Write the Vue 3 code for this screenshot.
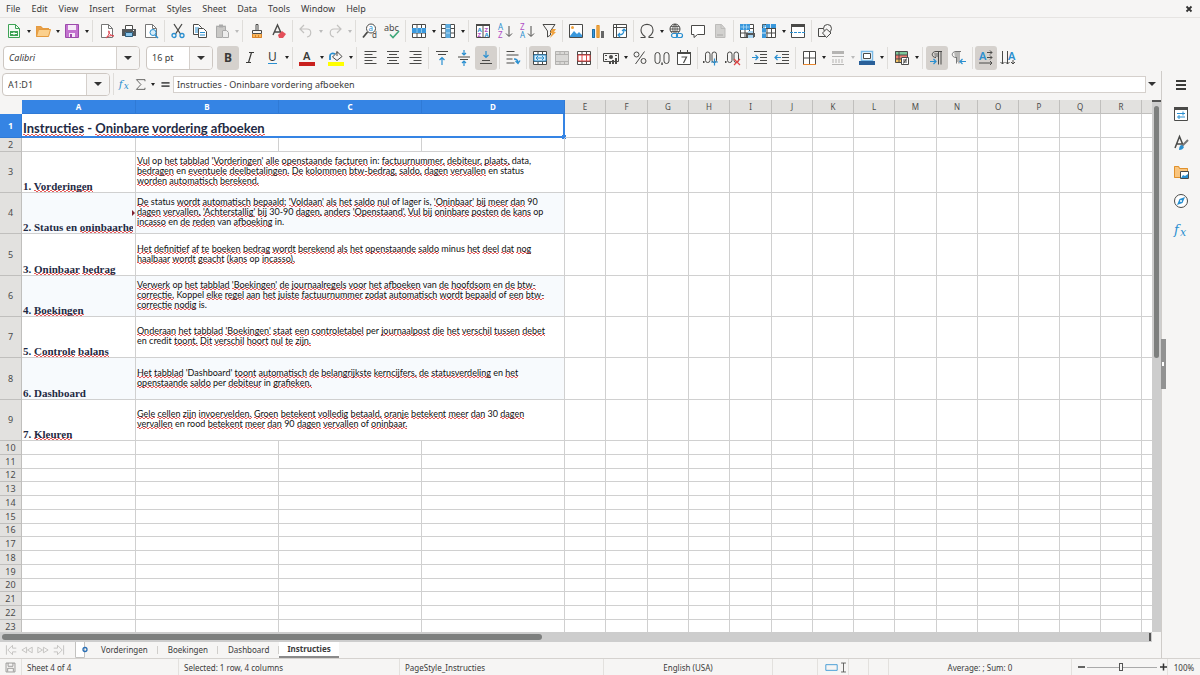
<script setup>
const D = '#4a4a48'
const B = '#2a8fd0'
const s = (d, c = D, w = 1) => `<path d="${d}" fill="none" stroke="${c}" stroke-width="${w}"/>`
const f = (d, c) => `<path d="${d}" fill="${c}"/>`
const grid = (c = D) => f('M1.500 1.500h13v13h-13z', '#fff') + s('M1.500 1.500h13v13h-13zM1.500 5.500h13M1.500 10h13M6 1.500v13M10.500 1.500v13', c)

const icons = {
  new: f('M2.500 1h7l4 4v10h-11z', '#f4fbf5') + s('M2.500 1.500h7l4 4v9h-11zM9.500 1.500v4h4', '#3fa356') + f('M4 8h8v5H4z', '#3fa356') + s('M5 10.500h6M8 9v3', '#fff'),
  open: f('M1 3h5l2 2h6v8H1z', '#e8a04a') + f('M3.500 6.500h12l-2 7.500H1z', '#fbd08d') + s('M1.500 13.500v-10h4l2 2h6v1M1.500 13.500l2-7h12l-2 7z', '#e59b3f'),
  save: f('M1.500 1.500h13v13h-13z', '#c373cf') + s('M1.500 1.500h13v13h-13z', '#9c4aab') + f('M4 2h8v5H4z', '#f6eaf8') + f('M5 10h6v4H5z', '#f6eaf8') + f('M6 11h2v3H6z', '#9c4aab'),
  pdf: f('M2.500 1h7l4 4v10h-11z', '#fff') + s('M2.500 1.500h7l4 4v9h-11zM9.500 1.500v4h4', '#777') + s('M7 15c3-3 4-6 3-7s-1 4 5 5c-3-1-6 0-8 2', '#dc4450', 1),
  print: f('M4 2h8v4H4z', '#fff') + s('M4.500 6V2.500h7V6') + f('M1 6h14v7H1z', '#55585a') + f('M4 9h8v5H4z', '#8cc6ec') + s('M4.500 9.500h7v4h-7z', '#2e5d7c') + f('M12 7h1v1h-1z', '#fff'),
  preview: f('M2.500 1h7l4 4v10h-11z', '#fff') + s('M2.500 1.500h7l4 4v9h-11zM9.500 1.500v4h4', '#777') + '<circle cx="10" cy="9.500" r="3" fill="#d8edf9" stroke="#2a8fd0"/>' + s('M12 12l3 3', B, 1.500),
  cut: s('M4 1l6.500 10M12 1L5.500 11', D, 1.300) + '<circle cx="4" cy="12.500" r="2" fill="none" stroke="#2a8fd0" stroke-width="1.300"/><circle cx="12" cy="12.500" r="2" fill="none" stroke="#2a8fd0" stroke-width="1.300"/>',
  copy: f('M1.500 1.500h6l2 2v8h-8z', '#fff') + s('M1.500 1.500h5l3 3v7h-8z') + s('M3 5h4M3 7h4M3 9h3', B) + f('M6.500 5.500h5l3 3v6h-8z', '#fff') + s('M6.500 5.500h5l3 3v6h-8z') + s('M8 9.500h5M8 12h5', B),
  paste: f('M2 2.500h10v12H2z', '#c9c8c6') + s('M2.500 3.500h9v11h-9z', '#aaa') + f('M5 1.500h4v3H5z', '#aaa') + f('M8 7h7v8H8z', '#ededed') + s('M8.500 7.500h4l2 2v5h-6z', '#aaa'),
  clone: s('M7 1.500h2v6H7z') + s('M3.500 7.500h9v3h-9z') + f('M3 11h10v4H3z', '#f7b65e') + s('M3.500 11v3.500h9V11M6.500 12v2.500M9.500 12v2.500', '#d9832a'),
  clear: s('M2 12L6.500 2 11 12M3.500 9h6', D, 1.400) + f('M7 12l4-4 4 3-3 4H8z', '#e4505a'),
  undo: s('M2 6h7c5 0 5 7 0 8M6 2L2 6l4 4', '#c3c2c0', 1.200),
  redo: s('M14 6H7c-5 0-5 7 0 8M10 2l4 4-4 4', '#c3c2c0', 1.200),
  find: '<circle cx="9" cy="5.500" r="4.500" fill="#fff" stroke="#4a4a48"/>' + s('M5.500 9L1 14.500', D, 1.800) + '<text x="6.500" y="8" font-size="8" font-family="Noto Sans" fill="#2a8fd0">a</text><text x="10" y="15" font-size="8" font-family="Noto Sans" fill="#4a4a48">d</text>',
  spell: '<text x="0" y="7.500" font-size="9" font-family="Noto Sans" fill="#4a4a48">abc</text>' + s('M6 11.500l3 3L15 8', '#3fa87a', 1.600),
  row: grid() + f('M1 5h14v5H1z', '#3a98dc') + s('M6 5v5M10.500 5v5', '#8cc6ec'),
  col: grid() + f('M5.500 1h5v14h-5z', '#5eacdf') + s('M6 5.500h4M6 10h4', '#b9dcf3'),
  sort: f('M1 1h14v14H1z', '#fff') + s('M1.500 1.500h13v13h-13zM8 1.500v13') + f('M1 1h14v2H1z', D) + '<g font-size="6" font-weight="700" font-family="Noto Sans"><text x="2.500" y="8.500" fill="#2a8fd0">A</text><text x="2.500" y="14" fill="#b14fc5">Z</text><text x="9.500" y="8.500" fill="#b14fc5">Z</text><text x="9.500" y="14" fill="#2a8fd0">A</text></g>',
  asc: '<g font-size="8" font-family="Noto Sans"><text x="1" y="7" fill="#2a8fd0">A</text><text x="1" y="15" fill="#b14fc5">Z</text></g>' + s('M12 3v10M9 10.500l3 3 3-3', D),
  desc: '<g font-size="8" font-family="Noto Sans"><text x="1" y="7" fill="#b14fc5">Z</text><text x="1" y="15" fill="#2a8fd0">A</text></g>' + s('M12 3v10M9 10.500l3 3 3-3', D),
  filter: s('M2 1.500h12L9.500 8v4l-3 2V8z') + f('M11 6h4l-2 3h2l-6 6 2-5H9z', '#f0a23e'),
  image: f('M1.500 1.500h13v13h-13z', '#fff') + s('M1.500 1.500h13v13h-13z') + f('M2 13l4-5 3 3 2-2 3 3v2H2z', '#3a98dc') + '<circle cx="4.500" cy="4.500" r="1.500" fill="#f0a23e"/>',
  chart: f('M2 6h3v9H2z', '#3a98dc') + f('M6.500 2h3v13h-3z', '#f5b14e') + f('M11 8h3v7h-3z', '#666') + s('M2.500 6.500h2v8h-2z', '#1d6fa8') + s('M7 2.500h2v12H7z', '#e0912c'),
  pivot: f('M1.500 1.500h13v13h-13z', '#fff') + s('M1.500 1.500h13v13h-13zM1.500 4.500h13M4.500 1.500v13') + s('M7 12c4 0 5-2 5-5M10 8l2-2 2 2M8 10l-2 2 2 2', B, 1.200),
  omega: s('M1.500 14.500h4.500v-1C3 11.500 2 9.500 2 7c0-7.500 12-7.500 12 0 0 2.500-1 4.500-4 6.500v1h4.500', D, 1.100),
  link: '<circle cx="7" cy="6" r="5" fill="none" stroke="#4a4a48"/>' + s('M2 6h10M7 1v10M7 1c-3 3-3 7 0 10M7 1c3 3 3 7 0 10M3 3.500h8M3 8.500h8', D, .8) + '<rect x="3.500" y="10.500" width="6" height="4" rx="2" fill="#f6f5f4" stroke="#2a8fd0" stroke-width="1.200"/><rect x="8.500" y="10.500" width="6" height="4" rx="2" fill="none" stroke="#2a8fd0" stroke-width="1.200"/>',
  comment: f('M1.500 2.500h13v9h-8l-3 3v-3h-2z', '#fff') + s('M1.500 2.500h13v9h-7l-3.500 3v-3H1.500z'),
  page: f('M3 1.500h6l4 4v9H3z', '#d2d1cf') + s('M3.500 1.500h6l3.500 4v9H3.500zM9 1.500v4h4', '#bdbcba') + f('M5 11h6v2H5z', '#bebdbb'),
  printarea: grid() + f('M1 1h10v6H1z', '#3a98dc') + s('M1.500 4h9M4.500 1.500v5M7.500 1.500v5', '#a9d5f2', .8) + f('M7 10h9v4H7z', '#55585a') + f('M9 8h5v2H9zM9 12h5v3H9z', '#a9d5f2'),
  freeze: grid() + f('M1 5h4v10H1zM5 1h10v4H5z', '#3a98dc') + s('M1 10h4M9.500 1v4', '#fff', .8) + s('M1 3h5M3 1v4', B),
  split: f('M1.500 1.500h13v13h-13z', '#fff') + s('M1.500 1.500h13v13h-13z') + f('M1 1h14v3H1z', D) + '<path d="M0 9.500h16" stroke="#2a8fd0" stroke-dasharray="3 1"/>',
  shapes: s('M1.500 5.500h7v8h-7z') + '<circle cx="10.500" cy="5.500" r="4" fill="#f6f5f4" stroke="#4a4a48"/>' + f('M9.500 6l4.500 4-4.500 4.500L5.500 10z', '#f6f5f4') + s('M9.500 6l4.500 4-4.500 4.500L5.500 10z'),
  bold: '<text x="4" y="12" font-size="12" font-weight="700" font-family="Noto Sans" fill="#3a3a38">B</text>',
  italic: s('M7 2.500h5M4 12.500h5M9.500 2.500l-3 10', '#3a3a38', 1.200),
  underline: '<text x="4" y="11" font-size="12" font-family="Noto Sans" fill="#3a3a38">U</text>' + s('M4 13.500h9', B, 1),
  color: '<text x="4" y="10" font-size="11" font-weight="600" font-family="Noto Sans" fill="#3a3a38">A</text>' + f('M0 12h16v4H0z', '#c9211e'),
  high: s('M4.500 7l5-5 4.500 4.500-5 4z') + s('M2 10V6c0-3 3-3 5-2', B, 1.800) + s('M9 1v5', D) + f('M0 12h16v4H0z', '#ffff00'),
  left: s('M1.500 1.500h12M1.500 4.500h8M1.500 7.500h12M1.500 10.500h8M1.500 13.500h12'),
  center: s('M2 1.500h12M4 4.500h8M2 7.500h12M4 10.500h8M2 13.500h12'),
  right: s('M2.500 1.500h12M6.500 4.500h8M2.500 7.500h12M6.500 10.500h8M2.500 13.500h12'),
  top: s('M2 1.500h12M4 4.500h8') + s('M8 15V8M5.500 10L8 7.500l2.500 2.500', B, 1.200),
  middle: s('M2 7h12M4 9.500h8') + s('M8 0v5M6 3l2 2 2-2M8 16v-5M6 13l2-2 2 2', B, 1.200),
  bottom: s('M2 13.500h12M4 10.500h8') + s('M8 1v6M5.500 5L8 7.500 10.500 5', B, 1.200),
  wrap: s('M1.500 1.500h8M1.500 5h12M1.500 9h6M1.500 13h8') + s('M9 9c3 0 4 1 4 4M10.500 11l2.500 2.500 2-3', B, 1.300),
  merge: f('M1.500 1.500h13v13h-13z', '#fff') + s('M1.500 1.500h13v13h-13zM1.500 4.500h13M1.500 11.500h13M6 1.500v3M10.500 1.500v3M6 11.500v3M10.500 11.500v3') + f('M2 5h12v6H2z', '#d8edf9') + s('M2 5h12v6H2zM4 8h8M6 6L4 8l2 2M10 6l2 2-2 2', B),
  mergec: f('M1 1h14v14H1z', '#d9d8d6') + s('M1.500 1.500h13v13h-13zM1.500 4.500h13M1.500 11.500h13M6 1.500v3M10.500 1.500v3M6 11.500v3M10.500 11.500v3', '#b3b2b0'),
  unmerge: f('M1.500 1.500h13v13h-13z', '#fff') + s('M1.500 1.500h13v13h-13zM1.500 4.500h13M1.500 11.500h13M6 1.500v3M10.500 1.500v3M6 11.500v3M10.500 11.500v3') + s('M2 5h12v6H2zM6 5v6M10.500 5v6', '#e04545'),
  money: s('M.500 3.500h15v8H.500z') + '<circle cx="8" cy="7" r="2" fill="#4a4a48"/>' + f('M2 5h2v1H2zM12 5h2v1h-2zM2 9h2v1H2z', D) + f('M6 11h2v3H6zM9 10h2v4H9zM12 8h2v6h-2z', D),
  percent: '<circle cx="4.500" cy="4.500" r="2.500" fill="none" stroke="#4a4a48"/><circle cx="11.500" cy="11" r="2.500" fill="none" stroke="#4a4a48"/>' + s('M12.500 1.500L3.500 14'),
  number: '<rect x="1" y="2.500" width="5" height="11" rx="2.500" fill="none" stroke="#4a4a48"/><rect x="10" y="2.500" width="5" height="11" rx="2.500" fill="none" stroke="#4a4a48"/>' + f('M7.300 12.500h1.500V15H7.300z', D),
  date: f('M1.500 2.500h13v12h-13z', '#fff') + s('M1.500 2.500h13v12h-13z') + f('M1 2h14v2H1zM4 0h1v3H4zM11 0h1v3h-1z', D) + s('M5.500 7h5l-3 6', D, 1.200),
  adddec: f('M0 11h1.500v2H0z', D) + '<rect x="2.500" y="2" width="4.500" height="10.500" rx="2.200" fill="none" stroke="#4a4a48"/><rect x="9" y="2" width="4.500" height="10.500" rx="2.200" fill="none" stroke="#4a4a48"/>' + s('M8 12h7M11.500 8.500v7', B, 1.200),
  deldec: f('M0 11h1.500v2H0z', D) + '<rect x="2.500" y="2" width="4.500" height="10.500" rx="2.200" fill="none" stroke="#4a4a48"/><rect x="9" y="2" width="4.500" height="10.500" rx="2.200" fill="none" stroke="#4a4a48"/>' + s('M9 9l6 6M15 9l-6 6', '#e04545', 1.200),
  indent: s('M2 1.500h13M8 4.500h7M8 7.500h7M8 10.500h7M2 13.500h13') + s('M0 7.500h6M3.500 5L6 7.500 3.500 10', B, 1.200),
  outdent: s('M2 1.500h13M8 4.500h7M8 7.500h7M8 10.500h7M2 13.500h13') + s('M1 7.500h6M3.500 5L1 7.500 3.500 10', B, 1.200),
  borders: f('M2 2h12v12H2z', '#fff') + s('M2.500 14.500v-13h12v13M8.500 1.500v13M2.500 8h12') + s('M2 14.500h13', '#e8872e'),
  lines: f('M2 1h12v3H2z', '#b5b4b2') + s('M2 6.500h12M2 14.500h12', '#b5b4b2') + '<path d="M2 10h12M2 12h12" stroke="#b5b4b2" stroke-dasharray="2 1"/>',
  bcolor: f('M3 2h10v8H3z', '#fff') + s('M2.500 1.500h11v9h-11z', '#7bbbe8', 1.500) + s('M4.500 3.500h7v5h-7z') + f('M0 11h16v4H0z', '#2a6099'),
  cond: f('M1 1h12v4H1z', '#7cc79a') + f('M1 5h12v4H1z', '#ee7d72') + f('M1 9h7v4H1z', '#f6c667') + s('M1.500 1.500h12v11h-12zM1.500 5h12M1.500 9h12M5 1.500v11') + f('M7 7h8v8H7z', '#fff') + s('M7.500 7.500h7v7h-7zM9 10h4M9 12h4M12.500 8.500l-3 5'),
  ltr: s('M7 7.500c-5 0-5-6 0-6h6M9.500 1.500v13M12 1.500v13', D) + f('M5 3h4v4H6z', '#9a9997') + s('M1 11.500h6M4.500 9L7 11.500 4.500 14', B, 1.200),
  rtl: s('M5 7.500c-5 0-5-6 0-6h5M5.500 1.500v12M8 1.500v12', '#777') + f('M3 2h5v10H6V7H4z', '#b8b7b5') + s('M9 11.500h6M11.500 9L9 11.500l2.500 2.500', B, 1.200),
  horiz: '<text x="1" y="9.500" font-size="11" font-weight="600" font-family="Noto Sans" fill="#2a8fd0">A</text>' + s('M9 2.500h5M12 .500l2 2-2 2M9 7.500h5M12 5.500l2 2-2 2M1 13h13M12 11l2 2-2 2'),
  vert: '<text x="8" y="9.500" font-size="11" font-weight="600" font-family="Noto Sans" fill="#2a8fd0">A</text>' + s('M2.500 1v13M.500 12l2 2 2-2M7.500 1v13M5.500 12l2 2 2-2M13 10v4M11 12l2 2 2-2'),
  fx: '<g font-family="DejaVu Serif" font-style="italic" fill="#2a8fd0"><text x="1" y="12" font-size="13">f</text><text x="7" y="14" font-size="11">x</text></g>',
  sum: s('M13.500 4V2H3l5.500 6L3 14h10.500v-2'),
  equals: f('M3 5h10v2H3zM3 9h10v2H3z', '#555'),
  menu: f('M3 3h10v2H3zM3 7h10v2H3zM3 11h10v2H3z', '#3a3a38'),
  props: f('M1.500 1.500h13v13h-13z', '#fff') + s('M1.500 1.500h13v13h-13z') + f('M1 1h14v3H1z', D) + s('M4 7.500h8M10 5.500v4M4 11h8M6 9v4', B),
  styles: s('M2 13L6.500 1.500 10 10M3.500 9h6', D, 1.500) + s('M15 5l-6 6', '#777', 2) + f('M6 15c0-3 1-5 3-5l2 2c-1 2-2 3-5 3z', B),
  gallery: f('M1 2h5l1 2h8v10H1z', '#f9c57f') + s('M1.500 2.500h4l1 2h8v9h-13z', '#e0912c') + f('M7 7h9v8H7z', '#fff') + s('M7.500 7.500h8v7h-8z') + f('M8 14l2-3 2 1 3-2v4z', B),
  nav: '<circle cx="8" cy="8" r="6.500" fill="#fff" stroke="#4a4a48"/>' + f('M12 4l-2.500 6L4 12l2.500-6z', B) + '<circle cx="8" cy="8" r="1" fill="#fff"/>',
  first: s('M1.500 3v10M3 8l5-5v3h4M3 8l5 5v-3h4', '#c3c2c0'),
  prev: s('M2 8l5-3v6zM8 8l5-3v6z', '#c3c2c0'),
  next: s('M14 8L9 5v6zM8 8L3 5v6z', '#c3c2c0'),
  last: s('M14.500 3v10M13 8L8 3v3H4M13 8l-5 5v-3H4', '#c3c2c0'),
  addsheet: f('M2 0h10v16H2z', '#fff') + s('M2.500 0v15.500h9V0', '#c3c2c0') + '<circle cx="12" cy="7.500" r="2" fill="none" stroke="#2a6fb5" stroke-width="1.300"/>',
  disk: s('M2.500 2.500h11v11h-11zM5 2.500v4h6v-4M4.500 13v-4h7v4', '#8a8987'),
  cell: s('M1 4.500h14v7H1z', B),
  cursor: s('M1 2.500h6M1 13.500h6M4 2.500v11', D)
}

/* "|" draws a divider, a leading "+" is a pressed button, "-" a disabled one, a trailing "*" adds a drop-down arrow */
const parse = (text) => text.split(' ').map((t) => {
  const m = t.match(/^([+-]?)([a-z|]+)(\*?)$/)
  return { name: m[2], on: m[1] === '+', off: m[1] === '-', drop: m[3] === '*' }
})
const standard = parse('new* open* save* | pdf print preview | cut copy -paste* | clone clear | -undo* -redo* | find spell | row* col* | sort asc desc filter | image chart pivot | omega* link comment -page | printarea freeze* split | shapes')
const formatting = parse('+bold italic underline* | color* high* | left center right | top middle +bottom | wrap | +merge -mergec unmerge | money* percent number date | adddec deldec | indent outdent | borders* -lines* bcolor* | cond* | +ltr rtl | +horiz vert')
const side = ['menu', 'props', 'styles', 'gallery', 'nav', 'fx']
const menus = ['File', 'Edit', 'View', 'Insert', 'Format', 'Styles', 'Sheet', 'Data', 'Tools', 'Window', 'Help']
const tabs = ['Vorderingen', 'Boekingen', 'Dashboard', 'Instructies']

const columns = 'ABCDEFGHIJKLMNOPQRSTUVWXYZ'.split('')
const wide = { A: 114, B: 143, C: 143, D: 143, F: 42, I: 42, M: 42 }
const colWidth = (c) => (wide[c] || 41) + 'px'

const known = new Set(['op', 'in', 'is', 'en', 'data', 'status', 'of', 'lager', 'minus', 'credit', 'per', 'dashboard', 'rood', 'koppel', 'van'])
const words = (line) => line.split(' ').map((w) => {
  const bare = w.replace(/[^A-Za-z-]/g, '').toLowerCase()
  return { w, bad: /[a-z]/.test(bare) && !known.has(bare) }
})
const notes = {
  3: ['1. Vorderingen', "Vul op het tabblad 'Vorderingen' alle openstaande facturen in: factuurnummer, debiteur, plaats, data,", 'bedragen en eventuele deelbetalingen. De kolommen btw-bedrag, saldo, dagen vervallen en status', 'worden automatisch berekend.'],
  4: ['2. Status en oninbaarheid', "De status wordt automatisch bepaald: 'Voldaan' als het saldo nul of lager is, 'Oninbaar' bij meer dan 90", "dagen vervallen, 'Achterstallig' bij 30-90 dagen, anders 'Openstaand'. Vul bij oninbare posten de kans op", 'incasso en de reden van afboeking in.'],
  5: ['3. Oninbaar bedrag', 'Het definitief af te boeken bedrag wordt berekend als het openstaande saldo minus het deel dat nog', 'haalbaar wordt geacht (kans op incasso).'],
  6: ['4. Boekingen', "Verwerk op het tabblad 'Boekingen' de journaalregels voor het afboeken van de hoofdsom en de btw-", 'correctie. Koppel elke regel aan het juiste factuurnummer zodat automatisch wordt bepaald of een btw-', 'correctie nodig is.'],
  7: ['5. Controle balans', "Onderaan het tabblad 'Boekingen' staat een controletabel per journaalpost die het verschil tussen debet", 'en credit toont. Dit verschil hoort nul te zijn.'],
  8: ['6. Dashboard', "Het tabblad 'Dashboard' toont automatisch de belangrijkste kerncijfers, de statusverdeling en het", 'openstaande saldo per debiteur in grafieken.'],
  9: ['7. Kleuren', 'Gele cellen zijn invoervelden. Groen betekent volledig betaald, oranje betekent meer dan 30 dagen', 'vervallen en rood betekent meer dan 90 dagen vervallen of oninbaar.']
}
const heights = [24, 14, 41, 41, 42, 41, 41, 42, 41, 14, 14, 13, 14, 14, 14, 13, 14, 14, 14, 13, 14, 14, 14]
const rows = heights.map((h, i) => ({ n: i + 1, h: h + 'px', note: notes[i + 1] }))
const rest = (r) => (r.n === 1 || r.note ? columns.slice(4) : columns)
</script>

<template>
  <div class="app">
    <nav class="menubar" aria-label="Menu">
      <button v-for="m in menus" :key="m" type="button">{{ m }}</button>
      <button class="close" type="button" aria-label="Close document">
        <svg viewBox="0 0 8 8"><path d="M1.500 1.500l5 5M6.500 1.500l-5 5" stroke="#333" stroke-width="1.800" /></svg>
      </button>
    </nav>

    <div class="toolbar" role="toolbar" aria-label="Standard">
      <template v-for="(t, i) in standard" :key="i">
        <span v-if="t.name === '|'" class="sep"></span>
        <template v-else>
          <button class="tool" type="button" :aria-label="t.name" :disabled="t.off"><svg viewBox="0 0 16 16" v-html="icons[t.name]"></svg></button>
          <button v-if="t.drop" class="drop" type="button" :aria-label="t.name + ' options'" :disabled="t.off"></button>
        </template>
      </template>
    </div>

    <div class="toolbar" role="toolbar" aria-label="Formatting">
      <div class="combo font">
        <input value="Calibri" aria-label="Font name"><button type="button" aria-label="Font list"></button>
      </div>
      <div class="combo size">
        <input value="16 pt" aria-label="Font size"><button type="button" aria-label="Size list"></button>
      </div>
      <template v-for="(t, i) in formatting" :key="i">
        <span v-if="t.name === '|'" class="sep"></span>
        <template v-else>
          <button class="tool" :class="{ on: t.on }" type="button" :aria-label="t.name" :disabled="t.off"><svg viewBox="0 0 16 16" v-html="icons[t.name]"></svg></button>
          <button v-if="t.drop" class="drop" type="button" :aria-label="t.name + ' options'" :disabled="t.off"></button>
        </template>
      </template>
    </div>

    <div class="main">
      <div class="work">
        <div class="formula">
          <div class="combo name">
            <input value="A1:D1" aria-label="Name box"><button type="button" aria-label="Names"></button>
          </div>
          <span class="sep"></span>
          <button class="small" type="button" aria-label="Function wizard"><svg viewBox="0 0 16 16" v-html="icons.fx"></svg></button>
          <button class="small" type="button" aria-label="Sum"><svg viewBox="0 0 16 16" v-html="icons.sum"></svg></button>
          <button class="drop" type="button" aria-label="Sum options"></button>
          <button class="small" type="button" aria-label="Formula"><svg viewBox="0 0 16 16" v-html="icons.equals"></svg></button>
          <input class="line" value="Instructies - Oninbare vordering afboeken" aria-label="Input line">
          <button class="expand" type="button" aria-label="Expand formula bar"></button>
        </div>

        <div class="sheet">
          <div class="view">
            <table>
              <colgroup>
                <col class="rowcol">
                <col v-for="c in columns" :key="c" :style="{ width: colWidth(c) }">
              </colgroup>
              <thead>
                <tr>
                  <th class="corner"></th>
                  <th v-for="(c, i) in columns" :key="c" :class="{ sel: i < 4 }" scope="col">{{ c }}</th>
                </tr>
              </thead>
              <tbody>
                <tr v-for="r in rows" :key="r.n" :class="{ tint: r.note && r.n % 2 === 0 }" :style="{ height: r.h }">
                  <th :class="{ sel: r.n === 1 }" scope="row">{{ r.n }}</th>
                  <td v-if="r.n === 1" colspan="4" class="title">
                    <template v-for="(x, k) in words('Instructies - Oninbare vordering afboeken')" :key="k"><span :class="{ bad: x.bad }">{{ x.w }}</span>{{ ' ' }}</template>
                    <i class="handle"></i>
                  </td>
                  <template v-if="r.note">
                    <td class="key">
                      <div><template v-for="(x, k) in words(r.note[0])" :key="k"><span :class="{ bad: x.bad }">{{ x.w }}</span>{{ ' ' }}</template></div>
                      <i v-if="r.n === 4" class="more"></i>
                    </td>
                    <td colspan="3" class="text">
                      <p v-for="(l, j) in r.note.slice(1)" :key="j"><template v-for="(x, k) in words(l)" :key="k"><span :class="{ bad: x.bad }">{{ x.w }}</span>{{ ' ' }}</template></p>
                    </td>
                  </template>
                  <td v-for="c in rest(r)" :key="c"></td>
                </tr>
              </tbody>
            </table>
          </div>
          <div class="vscroll"><div class="vthumb"></div></div>
          <div class="hscroll"><div class="hthumb"></div><span class="grip"></span></div>
        </div>

        <div class="tabs">
          <button v-for="n in ['first', 'prev', 'next', 'last']" :key="n" class="page" type="button" :aria-label="n + ' sheet'"><svg viewBox="0 0 16 16" v-html="icons[n]"></svg></button>
          <button class="add" type="button" aria-label="Add sheet"><svg viewBox="0 0 16 16" v-html="icons.addsheet"></svg></button>
          <button v-for="t in tabs" :key="t" class="tab" :class="{ active: t === 'Instructies' }" type="button">{{ t }}</button>
        </div>
      </div>

      <aside class="sidebar">
        <button v-for="n in side" :key="n" type="button" :aria-label="n"><svg viewBox="0 0 16 16" v-html="icons[n]"></svg></button>
        <span class="hide"></span>
      </aside>
    </div>

    <footer class="status">
      <span class="mid"><svg viewBox="0 0 16 16" v-html="icons.disk"></svg></span>
      <span>Sheet 4 of 4</span>
      <span>Selected: 1 row, 4 columns</span>
      <span>PageStyle_Instructies</span>
      <span class="mid">English (USA)</span>
      <span></span>
      <span class="modes"><svg viewBox="0 0 16 16" v-html="icons.cell"></svg><svg class="thin" viewBox="0 0 8 16" v-html="icons.cursor"></svg></span>
      <span></span>
      <span></span>
      <span class="mid">Average: ; Sum: 0</span>
      <span class="zoom">
        <button type="button" aria-label="Zoom out"><svg viewBox="0 0 8 8"><path d="M1 4h7" stroke="#333" stroke-width="1.500" /></svg></button>
        <input type="range" min="0" max="100" value="48" aria-label="Zoom">
        <button type="button" aria-label="Zoom in"><svg viewBox="0 0 8 8"><path d="M1 4h7M4.500 .500v7" stroke="#333" stroke-width="1.500" /></svg></button>
      </span>
      <span class="mid">100%</span>
    </footer>
  </div>
</template>

<style>
body { margin: 0; }
</style>

<style scoped>
* { box-sizing: border-box; }
.app {
  display: flex;
  flex-direction: column;
  height: 100vh;
  overflow: hidden;
  background: #f6f5f4;
  color: #3b3b3b;
  font: 9px "Noto Sans", sans-serif;
}
button { border: 0; padding: 0; margin: 0; background: none; font: inherit; color: inherit; }
input { font: inherit; color: inherit; min-width: 0; margin: 0; }
svg { display: block; width: 16px; height: 16px; overflow: visible; }

.menubar { display: flex; align-items: center; gap: 11px; height: 17px; padding: 0 7px 0 6px; flex: none; }
.menubar .close { margin-left: auto; }
.close svg { width: 8px; height: 8px; }

.toolbar { display: flex; align-items: center; height: 27px; padding-left: 3px; flex: none; }
.menubar + .toolbar { border-top: 1px solid #e6e4e2; }
.tool { display: flex; align-items: center; justify-content: center; width: 22px; height: 24px; border-radius: 3px; flex: none; }
.tool.on { background: #d5d1cd; }
.sep { width: 5px; height: 22px; flex: none; background: linear-gradient(#dfddda, #dfddda) 2px 0 / 1px 100% no-repeat; }
.drop + .sep { width: 6px; }
.drop { width: 7px; height: 20px; display: flex; align-items: center; justify-content: center; flex: none; }
.drop::before { content: ""; border: solid transparent; border-width: 3px 2px 0; border-top-color: #222; }
.drop:disabled::before { border-top-color: #bbb; }
.combo button::before, .expand::before { content: ""; border: solid transparent; border-width: 4px 4px 0; border-top-color: #333; }

.combo { display: flex; height: 24px; border: 1px solid #cdc7c2; border-radius: 4px; background: #fff; overflow: hidden; flex: none; }
.combo input { flex: 1; border: 0; padding: 0 5px; background: none; outline: 0; }
.combo button { width: 23px; border-left: 1px solid #d5d0cc; background: #f6f5f4; display: flex; align-items: center; justify-content: center; }
.combo.font { width: 137px; margin-right: 6px; }
.combo.font input { font-style: italic; }
.combo.size { width: 67px; margin-right: 4px; }

.main { display: flex; flex: 1; min-height: 0; }
.work { display: flex; flex-direction: column; flex: 1; min-width: 0; }
.formula { display: flex; align-items: center; height: 29px; padding: 0 4px 3px 2px; flex: none; }
.combo.name { width: 108px; height: 23px; margin-right: 1px; }
.small { width: 16px; height: 20px; display: flex; align-items: center; justify-content: center; flex: none; }
.small svg { width: 13px; height: 13px; }
.formula .drop { width: 9px; }
.line { flex: 1; height: 17px; padding: 0 3px; border: 1px solid #d5d0cc; background: #fff; outline: 0; }
.expand { width: 11px; height: 17px; display: flex; align-items: center; justify-content: center; }

.sheet { display: grid; grid-template: minmax(0, 1fr) 10px / minmax(0, 1fr) 9px; flex: 1; min-height: 0; }
.view { overflow: hidden; background: #fff; }
table { width: 0; table-layout: fixed; border-collapse: separate; border-spacing: 0; }
.rowcol { width: 22px; }
thead tr { height: 14px; }
th { padding: 0; border: solid #c0bfbd; border-width: 0 1px 1px 0; background: #e2e1df; font-weight: 400; line-height: 12px; text-align: center; color: #4b4b4b; }
thead th { font-size: 8px; }
.corner { background: #f6f5f4; border-color: #f6f5f4; }
.sel { background: #3584e4; color: #fff; font-weight: 700; border-color: #2f7ad6; }
td { position: relative; padding: 0; border: solid #d0d0d0; border-width: 0 1px 1px 0; line-height: 10px; white-space: nowrap; }
.tint .key, .tint .text { background: #f7fafd; }
.title { padding: 5px 0 0 1px; border-color: #3584e4; box-shadow: inset -1px -1px 0 #3584e4; font: 700 13px/18px Lato, sans-serif; color: #1f2a44; }
.handle { position: absolute; right: -2px; bottom: -2px; width: 4px; height: 4px; background: #3584e4; }
.key { vertical-align: bottom; font: 700 11px/11px "Liberation Serif", serif; color: #1f2a44; }
.key div { padding-left: 1px; margin-right: 2px; overflow: hidden; }
.more { position: absolute; right: 0; top: 17px; border: solid transparent; border-width: 3px 0 3px 3px; border-left-color: #802030; }
.text { padding-bottom: 2px; font-family: Lato, sans-serif; font-size: 9px; color: #111; }
.text p { margin: 0 0 0 1px; }
.bad {
  background:
    linear-gradient(90deg, #e65a5a 50%, transparent 0) 0 calc(100% - 1px) / 4px 1px repeat-x,
    linear-gradient(90deg, transparent 50%, #e65a5a 0) 0 100% / 4px 1px repeat-x;
}

.vscroll { display: flex; flex-direction: column; align-items: center; padding-top: 4px; background: #cdcdcd; border-top: 2px solid #555; }
.vthumb { width: 5px; height: 48%; border-radius: 3px; background: #7d7f7e; }
.hscroll { display: flex; align-items: center; justify-content: space-between; padding: 0 1px 0 2px; background: #cdcdcd; }
.hthumb { width: 47%; height: 6px; border-radius: 3px; background: #7d7f7e; }
.grip { width: 2px; height: 8px; background: #555; }

.tabs { display: flex; height: 16px; padding-left: 5px; font-size: 8px; flex: none; }
.page { width: 15px; }
.page svg { width: 15px; }
.add { width: 16px; margin: 0 2px 0 8px; }
.tab { padding: 0 10px; line-height: 14px; background: linear-gradient(#d0cecb, #d0cecb) 100% 4px / 1px 8px no-repeat; }
.tab.active { padding: 0 8px; background: #fff; border-bottom: 2px solid #8a8a8a; font-weight: 700; }

.sidebar { position: relative; display: flex; flex-direction: column; align-items: center; gap: 7px; width: 39px; padding-top: 3px; border-left: 1px solid #cfccc9; flex: none; }
.sidebar button { height: 22px; display: flex; align-items: center; }
.hide { position: absolute; left: -1px; top: 268px; width: 5px; height: 50px; background: linear-gradient(#fff, #fff) 1px 50% / 2px 4px no-repeat #929292; }

.status { display: grid; grid-template-columns: 22px 157fr 221fr 204fr 169fr 45fr 31fr 20fr 20fr 183fr 96px 32px; height: 17px; border-top: 1px solid #d5d2cf; font-size: 8px; flex: none; }
.status > span { display: flex; align-items: center; padding-left: 5px; border-right: 1px solid #e3e1de; white-space: nowrap; }
.status > span:last-child { border-right: 0; }
.status .mid { justify-content: center; padding-left: 0; }
.status svg { width: 13px; height: 13px; flex: none; }
.status .modes { gap: 2px; padding-left: 7px; }
.status .thin { width: 7px; }
.status .zoom { gap: 2px; padding-left: 5px; }
.status .zoom svg { width: 8px; height: 8px; }
.zoom input { flex: 1; height: 10px; appearance: none; background: linear-gradient(#aaa, #aaa) 0 50% / 100% 1px no-repeat; }
.zoom input::-webkit-slider-thumb { appearance: none; width: 4px; height: 8px; border: 1px solid #555; background: #f6f5f4; }
</style>
